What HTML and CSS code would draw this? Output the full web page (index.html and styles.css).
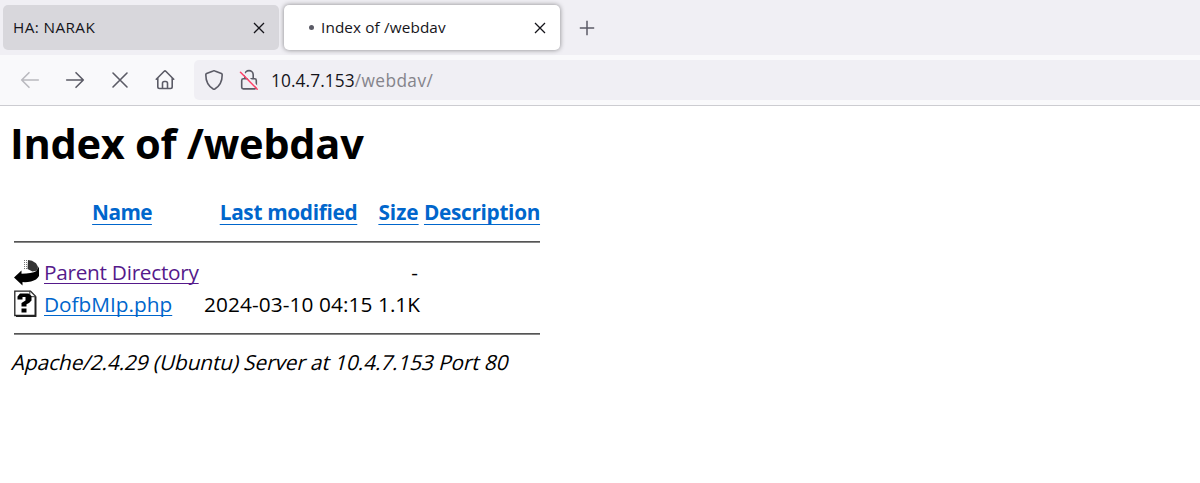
FILE: index.html
```html
<!DOCTYPE html>
<html lang="en">
<head>
<meta charset="utf-8">
<title>Index of /webdav</title>
<link rel="stylesheet" href="styles.css">
</head>
<body>
<div class="tabs">
  <div class="tab"><span class="tab-title first">HA: NARAK</span><svg class="close" width="12" height="12" viewBox="0 0 12 12"><path d="M1 1l10 10M11 1L1 11"/></svg></div>
  <div class="tab active"><i class="dot"></i><span class="tab-title second">Index of /webdav</span><svg class="close" width="12" height="12" viewBox="0 0 12 12"><path d="M1 1l10 10M11 1L1 11"/></svg></div>
  <svg class="plus" width="16" height="16" viewBox="0 0 16 16"><path d="M8 .8v14.4M.8 8h14.4"/></svg>
</div>
<div class="toolbar">
  <svg class="ico faded" width="20" height="20" viewBox="0 0 20 20"><path d="M18.3 10H1.7M9 2.7L1.7 10 9 17.3"/></svg>
  <svg class="ico" width="20" height="20" viewBox="0 0 20 20"><path d="M1.7 10h16.6M11 2.7l7.3 7.3-7.3 7.3"/></svg>
  <svg class="ico" width="20" height="20" viewBox="0 0 20 20"><path d="M3 3l14 14M17 3L3 17"/></svg>
  <svg class="ico" width="20" height="20" viewBox="0 0 20 20"><path d="M1.3 9.2L9.2 1.3q.8-.7 1.6 0l7.9 7.9M2.8 8v8.8q0 1.7 1.7 1.7h11q1.7 0 1.7-1.7V8M7.5 18.3v-5.1q0-1.7 1.7-1.7h1.6q1.7 0 1.7 1.7v5.1"/></svg>
  <div class="url">
    <svg class="ico" width="20" height="22" viewBox="0 0 20 22"><path d="M9.2 1.9Q10 1.5 10.8 1.9L17.4 4.5Q18.2 4.9 18.2 5.8C18.2 12 16 17 10.8 20Q10 20.4 9.2 20C4 17 1.8 12 1.8 5.8Q1.8 4.9 2.6 4.5Z"/></svg>
    <svg class="ico lock" width="20" height="22" viewBox="0 0 20 22"><path d="M5.8 9.5V5.8a4.2 4.2 0 0 1 8.4 0v3.7M4.3 9.8h11.4q1.6 0 1.6 1.6v6.9q0 1.6-1.6 1.6H4.3q-1.6 0-1.6-1.6v-6.9q0-1.6 1.6-1.6z"/><path class="halo" d="M3 2.2l16 16.5"/><path class="slash" d="M1.5 3.2l16.7 17"/></svg>
    <span class="address">10.4.7.153<span class="path">/webdav/</span></span>
  </div>
</div>
<main>
  <h1>Index of /webdav</h1>
  <div class="row head">
    <span></span><a class="name" href="#">Name</a><a class="modified" href="#">Last modified</a><a class="size-head" href="#">Size</a><a class="desc" href="#">Description</a>
  </div>
  <div class="rule"></div>
  <div class="row parent">
    <svg width="26" height="27" viewBox="0 0 26 27"><path fill="#333" d="M14 1l4 .8 4 2.500 2 3.500-.5 3.700-5 1-5-2.500z"/><path d="M10 1.500h4M10 3.500h4M10 5.500h4M10 7.500h4M10 9.500h4" stroke="#777" stroke-dasharray="1 1"/><path d="M25 7.500v9.500q-2 4-8 5.500-5 1-8.500.5v3.500L0 18.500 7.500 11.500v3.200q10 0 15-2.700z"/></svg>
    <a class="parent-name visited" href="#">Parent Directory</a><span></span><span class="dash">-</span><span></span>
  </div>
  <div class="row file">
    <svg width="26" height="28" viewBox="0 0 26 28"><path d="M.8 1.200h15.700l5 5V25.500H.8z" fill="#fff" stroke="#222" stroke-width="1.300"/><path d="M21.500 6.500v19.700H2" fill="none" stroke="#222" stroke-width="1.800"/><path d="M15.800 1v5.700h5.700z" fill="#fff" stroke="#333"/><path d="M3.500 9.500V6.500L6 3.500h8.500L17.500 6v4.500L15 13l-2.500 1.200v2.300H7.500v-3.500l4-2.500V7H8.500v2.500z"/><path d="M7.500 18.500h5v4h-5z"/></svg>
    <a class="file-name" href="#">DofbMIp.php</a><span class="date">2024-03-10 04:15</span><span class="size">1.1K</span><span></span>
  </div>
  <div class="rule"></div>
  <footer>Apache/2.4.29 (Ubuntu) Server at 10.4.7.153 Port 80</footer>
</main>
</body>
</html>
```
FILE: styles.css
```css
* { box-sizing: border-box; }
body { margin: 0; height: 483px; overflow: hidden; background: #fff; color: #000; font-family: "Open Sans", sans-serif; }
svg { display: block; flex: none; }
.tabs { display: flex; height: 55px; padding: 5px 0 0 3px; gap: 5px; background: #f0eff4; color: #15141a; }
.tab { display: flex; align-items: center; width: 276px; height: 45px; padding: 0 14px 0 10px; border-radius: 5px; background: #d8d7dc; }
.tab.active { background: #fff; box-shadow: 0 0 5px rgba(0,0,0,.45); padding-left: 25px; }
.tab-title { font-size: 15.3px; white-space: nowrap; padding-bottom: 2px; }
.first { letter-spacing: .4px; }
.second { letter-spacing: .12px; }
.close { margin-left: auto; fill: none; stroke: #15141a; stroke-width: 1.3; }
.dot { width: 5px; height: 5px; margin-right: 7px; border-radius: 50%; background: #5b5b66; }
.plus { margin: 15px 0 0 14px; fill: none; stroke: #5b5b66; stroke-width: 1.5; }
.toolbar { display: flex; align-items: center; height: 51px; padding-left: 20px; gap: 25px; background: #f9f9fb; border-bottom: 1px solid #ccccd1; }
.ico { fill: none; stroke: #5b5b66; stroke-width: 1.6; stroke-linecap: round; stroke-linejoin: round; }
.faded { opacity: .4; }
.url { display: flex; align-items: center; flex: 1; height: 40px; margin-left: -6px; padding-left: 10px; border-radius: 5px 0 0 5px; background: #f0eff4; }
.lock { margin-left: 15px; }
.halo { stroke: #f0eff4; stroke-width: 2; }
.slash { stroke: #ff4068; stroke-width: 1.5; }
.address { margin-left: 12px; font-size: 17.3px; letter-spacing: .1px; white-space: nowrap; color: #15141a; }
.path { color: #85848b; letter-spacing: .4px; }
main { padding-left: 11px; font-size: 20.8px; }
h1 { margin: 0 0 0 -1px; padding-top: 9px; height: 86px; font-size: 41.6px; line-height: 57px; white-space: nowrap; letter-spacing: -.3px; }
.row { display: grid; grid-template-columns: 26px 156px 168px 41px 116px; column-gap: 5px; margin-left: 3px; width: 527px; height: 32px; line-height: 32px; align-items: center; white-space: nowrap; }
.row > :nth-child(n+2) { margin-left: -1px; }
.head { height: 49px; align-items: start; padding-top: 4px; font-weight: 700; }
.head a { justify-self: center; letter-spacing: -.32px; text-underline-offset: 4px; }
.row.head > a { margin-left: -2px; }
.head .name { letter-spacing: -.6px; }
.row.head > .modified { margin-left: -3px; }
.head .size-head { letter-spacing: 0; }
a { color: #0066cc; text-decoration: underline; text-decoration-thickness: 1px; text-underline-offset: 3px; text-decoration-skip-ink: none; }
.visited { color: #551a8b; letter-spacing: -.28px; }
.rule { width: 526px; height: 2px; margin-left: 3px; background: linear-gradient(#555 50%, #888 50%); }
.parent { margin-top: 13px; }
.file { margin-bottom: 13px; }
.date { letter-spacing: .1px; }
.dash { text-align: right; padding-right: 2px; }
.row > .date { margin-left: -2px; }
footer { width: max-content; margin-top: 11px; line-height: 32px; letter-spacing: -.1px; white-space: nowrap; transform: skewX(-14deg); transform-origin: 0 23px; }
```
